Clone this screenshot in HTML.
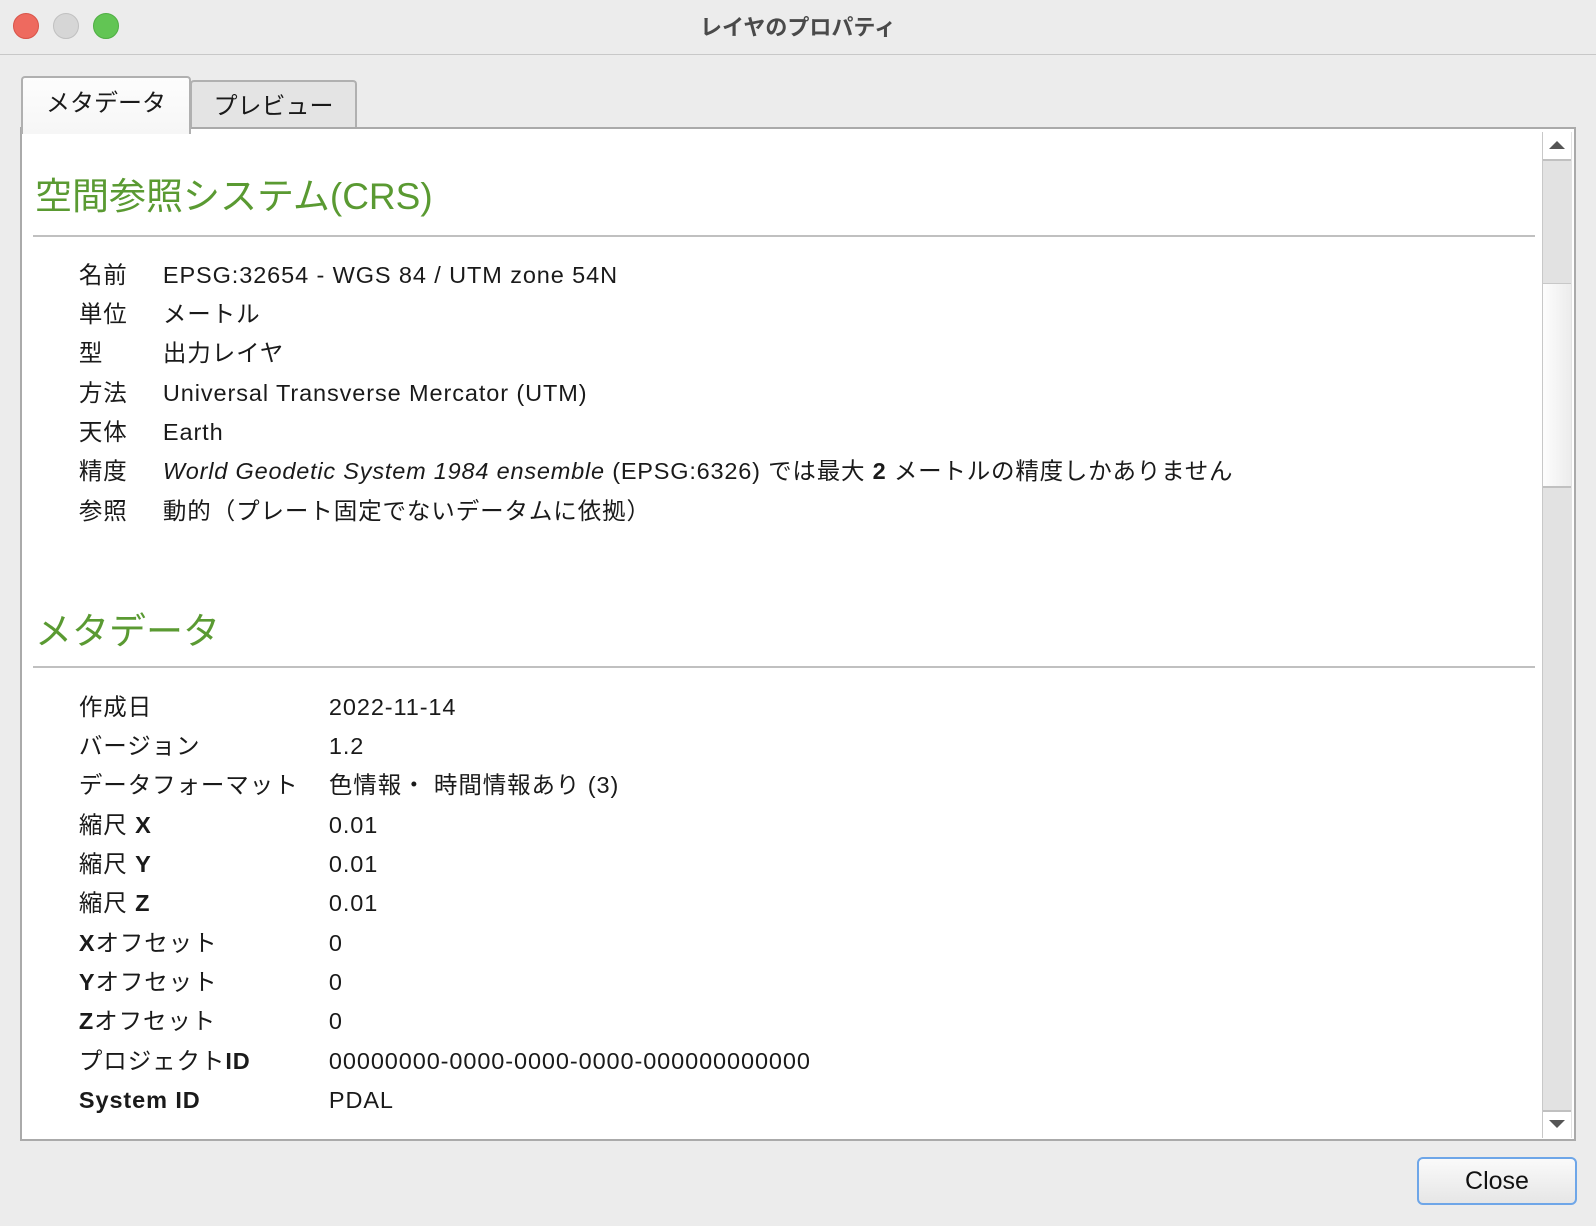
<!DOCTYPE html>
<html><head><meta charset="utf-8"><style>
html,body{margin:0;padding:0}
body{width:1596px;height:1226px;position:relative;overflow:hidden;background:#ececec;font-family:"Liberation Sans","Noto Sans CJK JP",sans-serif;color:#1a1a1a}
.a{position:absolute}
.tb{left:0;top:0;width:1596px;height:54px;background:#ececec;border-bottom:1px solid #c8c8c8}
.dot{width:24px;height:24px;border-radius:50%;top:13px}
.title{left:0;width:1596px;top:10px;text-align:center;font-size:22px;color:#4a4a4a;font-weight:bold}
.tab{font-size:24px;text-align:center;border:2px solid #b0b0b0;border-bottom:none;border-radius:4px 4px 0 0}
.frame{left:20px;top:127px;width:1552px;height:1010px;border:2px solid #aaa;background:#fff}
.h{color:#5a9a32;font-size:37px;left:35px}
.h::before,.r::before{content:"あ";visibility:hidden;margin-right:-1em}
.hr{left:33px;width:1502px;height:2px;background:#c0c0c0}
.r{font-size:23.5px;white-space:nowrap;letter-spacing:0.9px;line-height:34px}
.lab{left:78px}
.v1{left:162px}
.v2{left:328px}
.sb{left:1542px;top:132px;width:29px;height:1006px;background:#e2e2e2;border-left:1px solid #c8c8c8}
.btn{left:1417px;top:1157px;width:156px;height:44px;border:2px solid #6ea6e8;border-radius:6px;background:linear-gradient(#fafafa,#e6e6e6);font-size:25px;text-align:center;line-height:44px;color:#111}
</style></head><body>
<div class="a tb"></div>
<div class="a dot" style="left:13px;background:#ee6a5f;border:1px solid #d85449"></div>
<div class="a dot" style="left:53px;background:#d6d6d6;border:1px solid #c0c0c0"></div>
<div class="a dot" style="left:93px;background:#62c554;border:1px solid #4fae43"></div>
<div class="a title">レイヤのプロパティ</div>

<div class="a tab" style="left:190px;top:80px;width:163px;height:48px;background:#e4e4e4;line-height:50px">プレビュー</div>
<div class="a frame"></div>
<div class="a tab" style="left:21px;top:76px;width:166px;height:56px;background:linear-gradient(#fdfdfd,#f6f6f6);line-height:52px;z-index:2">メタデータ</div>

<div class="a h" style="top:166px">空間参照システム(CRS)</div>
<div class="a hr" style="top:235px"></div>
<div class="a r lab" style="top:258px">名前</div><div class="a r v1" style="top:258px">EPSG:32654 - WGS 84 / UTM zone 54N</div>
<div class="a r lab" style="top:297px">単位</div><div class="a r v1" style="top:297px">メートル</div>
<div class="a r lab" style="top:336px">型</div><div class="a r v1" style="top:336px">出力レイヤ</div>
<div class="a r lab" style="top:376px">方法</div><div class="a r v1" style="top:376px">Universal Transverse Mercator (UTM)</div>
<div class="a r lab" style="top:415px">天体</div><div class="a r v1" style="top:415px">Earth</div>
<div class="a r lab" style="top:454px">精度</div><div class="a r v1" style="top:454px;letter-spacing:0.8px"><i>World Geodetic System 1984 ensemble</i> (EPSG:6326) では最大 <b>2</b> メートルの精度しかありません</div>
<div class="a r lab" style="top:494px">参照</div><div class="a r v1" style="top:494px">動的（プレート固定でないデータムに依拠）</div>

<div class="a h" style="top:601px">メタデータ</div>
<div class="a hr" style="top:666px"></div>
<div class="a r lab" style="top:690px">作成日</div><div class="a r v2" style="top:690px">2022-11-14</div>
<div class="a r lab" style="top:729px">バージョン</div><div class="a r v2" style="top:729px">1.2</div>
<div class="a r lab" style="top:768px">データフォーマット</div><div class="a r v2" style="top:768px">色情報・ 時間情報あり (3)</div>
<div class="a r lab" style="top:808px">縮尺 <b>X</b></div><div class="a r v2" style="top:808px">0.01</div>
<div class="a r lab" style="top:847px">縮尺 <b>Y</b></div><div class="a r v2" style="top:847px">0.01</div>
<div class="a r lab" style="top:886px">縮尺 <b>Z</b></div><div class="a r v2" style="top:886px">0.01</div>
<div class="a r lab" style="top:926px"><b>X</b>オフセット</div><div class="a r v2" style="top:926px">0</div>
<div class="a r lab" style="top:965px"><b>Y</b>オフセット</div><div class="a r v2" style="top:965px">0</div>
<div class="a r lab" style="top:1004px"><b>Z</b>オフセット</div><div class="a r v2" style="top:1004px">0</div>
<div class="a r lab" style="top:1044px">プロジェクト<b>ID</b></div><div class="a r v2" style="top:1044px">00000000-0000-0000-0000-000000000000</div>
<div class="a r lab" style="top:1083px"><b>System ID</b></div><div class="a r v2" style="top:1083px">PDAL</div>

<div class="a sb"></div>
<div class="a" style="left:1543px;top:132px;width:28px;height:27px;background:#fff;border-bottom:2px solid #c0c0c0"></div>
<div class="a" style="left:1549px;top:141px;width:0;height:0;border-left:8px solid transparent;border-right:8px solid transparent;border-bottom:8px solid #555"></div>
<div class="a" style="left:1543px;top:283px;width:28px;height:202px;background:linear-gradient(90deg,#fdfdfd,#ececec);border-top:1px solid #c8c8c8;border-bottom:2px solid #c0c0c0"></div>
<div class="a" style="left:1543px;top:1110px;width:28px;height:27px;background:#fff;border-top:2px solid #c0c0c0"></div>
<div class="a" style="left:1549px;top:1120px;width:0;height:0;border-left:8px solid transparent;border-right:8px solid transparent;border-top:8px solid #555"></div>

<div class="a btn">Close</div>
</body></html>
